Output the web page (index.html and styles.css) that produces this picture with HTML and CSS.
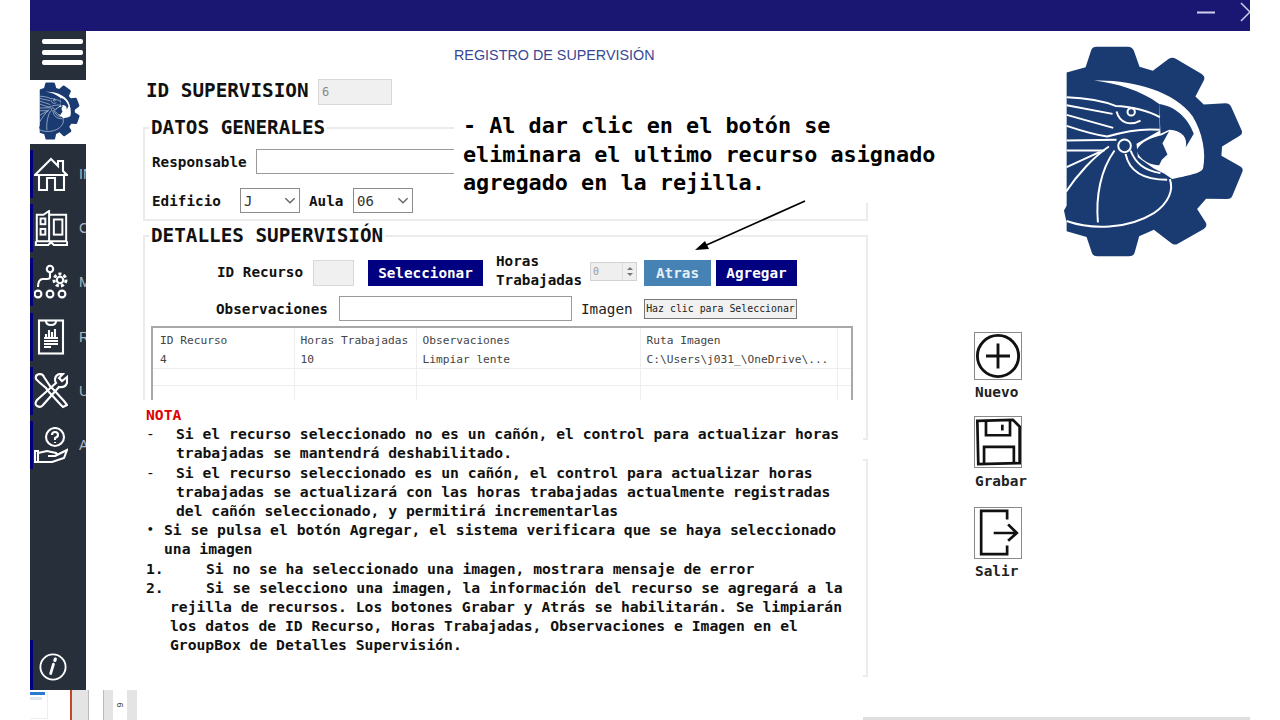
FILE: index.html
```html
<!DOCTYPE html>
<html lang="es">
<head>
<meta charset="utf-8">
<title>Registro de Supervisión</title>
<link rel="stylesheet" href="styles.css">
</head>
<body>
<svg class="defs" aria-hidden="true">
  <defs>
    <g id="tecnm">
      <path class="lg-fill" d="M78 218 L135 202 L152 150 Q156 140 168 140 L262 140 Q275 140 280 152 L297 200 L337 212 L385 176 Q396 170 406 176 L484 222 Q496 230 490 242 L465 290 L490 314 L555 310 Q568 310 573 322 L604 392 Q608 402 598 408 L545 440 L543 468 L600 500 Q610 506 606 516 L576 588 Q572 598 560 598 L497 597 L470 628 L496 668 Q502 680 490 688 L412 732 Q402 738 392 730 L340 690 L296 710 L282 760 Q278 770 266 770 L170 770 Q158 770 154 760 L138 712 L78 695 L78 668 L70 632 L78 618 Z"/>
      <path class="lg-white" d="M160 242 C270 238 400 272 456 348 C486 396 498 460 488 505 C482 522 440 526 395 538 L372 522 L340 506 L292 472 L288 432 L358 392 L356 312 C300 272 230 250 160 242 Z"/>
      <path class="lg-fill" d="M356 312 C400 318 442 350 460 402 L436 442 C442 415 426 392 386 390 L360 402 Z"/>
      <path class="lg-fill" d="M288 452 C298 425 338 412 364 406 L386 394 L366 430 L381 464 L364 480 L356 496 C330 496 298 482 288 452 Z"/>
      <g class="lg-line">
        <path d="M78 292 C130 294 180 300 225 318 C270 318 330 335 358 352"/>
        <path d="M78 316 L216 342"/>
        <path d="M78 345 L218 384"/>
        <path d="M78 378 C120 392 165 405 200 410 C250 395 310 385 358 390"/>
        <path d="M78 422 L228 420"/>
        <path d="M78 452 L192 452"/>
        <path d="M78 502 L178 456"/>
        <path d="M76 576 C110 525 160 470 205 440"/>
        <path d="M172 668 C165 590 180 510 222 452"/>
        <path d="M78 664 C150 690 260 690 340 640 C385 610 400 570 388 538"/>
        <path d="M255 462 C265 510 300 540 380 540"/>
        <path d="M270 452 C285 490 310 512 360 520"/>
        <path d="M228 335 C238 372 270 378 300 362"/>
        <circle cx="252" cy="438" r="19"/>
        <circle cx="272" cy="336" r="11"/>
      </g>
    </g>
  </defs>
</svg>

<div class="app">
  <header class="topbar">
    <svg class="win-min" viewBox="0 0 18 3"><rect width="18" height="2" y="0.5"/></svg>
    <svg class="win-close" viewBox="0 0 10 20"><path d="M1 1 L10 10 L1 19"/></svg>
  </header>

  <div class="workspace">
    <aside class="sidebar">
      <div class="menu-btn"><span></span><span></span><span></span></div>
      <div class="side-logo">
        <svg class="logo-small" viewBox="68 135 545 640" preserveAspectRatio="none"><use href="#tecnm"/></svg>
      </div>
      <nav class="nav">
        <a class="nav-item">
          <svg class="nav-ic" viewBox="0 0 34 34"><path d="M1 18 L17 2 L24 9 V4 H29 V14 L33 18 Z"/><path d="M5 18 V33 H13 V21 H21 V33 H30 V18"/></svg>
          <span>INICIO</span>
        </a>
        <a class="nav-item">
          <svg class="nav-ic" viewBox="0 0 34 38"><path d="M2 5 L9 5 L15 1 V33 H2 Z"/><path d="M15 5 H33 V33 H15"/><path d="M1 33 V37 H14 L17 34 L20 37 H34 V33"/><rect x="6" y="9" width="5" height="6"/><rect x="6" y="20" width="5" height="6"/><rect x="20" y="10" width="9" height="16"/></svg>
          <span>CATÁLOGOS</span>
        </a>
        <a class="nav-item">
          <svg class="nav-ic" viewBox="0 0 34 34"><circle cx="16" cy="4" r="3.2"/><path d="M16 8 V12 Q16 14 13 14 H9 Q4 14 4 22"/><circle cx="4" cy="29" r="3.4"/><circle cx="16" cy="29" r="3.4"/><circle cx="28" cy="29" r="3.4"/><circle cx="26" cy="15" r="3.2"/><circle class="nav-dash" cx="26" cy="15" r="6"/></svg>
          <span>MOVIMIENTOS</span>
        </a>
        <a class="nav-item">
          <svg class="nav-ic" viewBox="0 0 34 34"><rect x="5" y="0.5" width="24" height="33"/><path d="M12 1 Q12 5 17 5 Q22 5 22 1"/><path d="M10 18 H24 M12 18 V14 M15 18 V10 M18 18 V12 M21 18 V9 M10 21 H24 M10 24 H24 M10 27 H17"/></svg>
          <span>REPORTES</span>
        </a>
        <a class="nav-item">
          <svg class="nav-ic" viewBox="0 0 34 36"><path d="M2 6 Q1 2 5 1 Q9 1 10 4 L16 13 L19 16 L30 28 L33 32 L29 34 L26 31 L15 19 L12 15 L5 9 Z"/><path d="M33 4 L28 8 L25 5 L29 1 Q22 0 21 6 Q21 9 22 10 L3 27 Q0 31 3 33 Q7 35 9 32 L25 14 Q31 15 33 10 Z"/></svg>
          <span>UTILERÍAS</span>
        </a>
        <a class="nav-item">
          <svg class="nav-ic" viewBox="0 0 34 36"><circle cx="21" cy="10" r="9"/><path d="M18 8 Q18 5 21 5 Q24 5 24 8 Q24 10 21 11 V13 M21 15 V16"/><path d="M1 24 H4 V35 H1 Z"/><path d="M4 26 L13 24 L22 26 Q24 28 21 29 H14 M21 29 L33 23 L30 31 L18 35 H4"/></svg>
          <span>AYUDA</span>
        </a>
      </nav>
      <div class="nav-foot">
        <svg class="info-ic" viewBox="0 0 30 30"><circle cx="15" cy="15" r="13.5"/><path d="M12.5 22 L15.5 12"/><path d="M17 8 L17.5 6.5"/></svg>
      </div>
    </aside>

    <main class="form">
      <h1 class="title">REGISTRO DE SUPERVISIÓN</h1>

      <div class="id-row">
        <label class="lbl-big">ID SUPERVISION</label>
        <input class="field field-off field-id" value="6" disabled>
      </div>

      <fieldset class="box box-datos">
        <legend>DATOS GENERALES</legend>
        <div class="row row-resp">
          <label class="lbl lbl-resp">Responsable</label>
          <input class="field field-resp">
        </div>
        <div class="row row-edif">
          <label class="lbl lbl-edif">Edificio</label>
          <div class="combo"><span>J</span><svg viewBox="0 0 10 6"><path d="M1 1 L5 5 L9 1"/></svg></div>
          <label class="lbl lbl-aula">Aula</label>
          <div class="combo"><span>06</span><svg viewBox="0 0 10 6"><path d="M1 1 L5 5 L9 1"/></svg></div>
        </div>
      </fieldset>

      <fieldset class="box box-detalles">
        <legend>DETALLES SUPERVISIÓN</legend>
        <div class="row row-rec">
          <label class="lbl lbl-rec">ID Recurso</label>
          <input class="field field-off field-rec" disabled>
          <button class="btn btn-sel">Seleccionar</button>
          <label class="lbl lbl-horas">Horas<br>Trabajadas</label>
          <div class="spin"><span>0</span><div class="spin-arrows"><i class="up"></i><i class="down"></i></div></div>
          <button class="btn btn-atras">Atras</button>
          <button class="btn btn-agregar">Agregar</button>
        </div>
        <div class="row row-obs">
          <label class="lbl lbl-obs">Observaciones</label>
          <input class="field field-obs">
          <label class="lbl-img">Imagen</label>
          <button class="btn-img">Haz clic para Seleccionar</button>
        </div>
        <div class="grid-wrap">
          <table class="grid">
            <colgroup><col class="c1"><col class="c2"><col class="c3"><col class="c4"><col></colgroup>
            <tr class="head"><td>ID Recurso</td><td>Horas Trabajadas</td><td>Observaciones</td><td>Ruta Imagen</td><td></td></tr>
            <tr class="first"><td>4</td><td>10</td><td>Limpiar lente</td><td>C:\Users\j031_\OneDrive\...</td><td></td></tr>
            <tr><td></td><td></td><td></td><td></td><td></td></tr>
            <tr><td></td><td></td><td></td><td></td><td></td></tr>
          </table>
        </div>
      </fieldset>

      <fieldset class="box box-empty"></fieldset>

      <div class="callout">- Al dar clic en el botón se<br>eliminara el ultimo recurso asignado<br>agregado en la rejilla.</div>

      <svg class="arrow" viewBox="0 0 120 60"><path class="arrow-line" d="M115 1 L12 47"/><path class="arrow-head" d="M5 50 L15 41 L19 49 Z"/></svg>

      <section class="note">
        <div class="note-title">NOTA</div>
        <div class="item item-dash"><span class="mark mark-thin">-</span><p>Si el recurso seleccionado no es un cañón, el control para actualizar horas<br>trabajadas se mantendrá deshabilitado.</p></div>
        <div class="item item-dash"><span class="mark mark-thin">-</span><p>Si el recurso seleccionado es un cañón, el control para actualizar horas<br>trabajadas se actualizará con las horas trabajadas actualmente registradas<br>del cañón seleccionado, y permitirá incrementarlas</p></div>
        <div class="item item-bullet"><span class="mark">•</span><p>Si se pulsa el botón Agregar, el sistema verificara que se haya seleccionado<br>una imagen</p></div>
        <div class="item item-num"><span class="mark">1.</span><p>Si no se ha seleccionado una imagen, mostrara mensaje de error</p></div>
        <div class="item item-num"><span class="mark">2.</span><p>Si se selecciono una imagen, la información del recurso se agregará a la</p></div>
        <p class="cont">rejilla de recursos. Los botones Grabar y Atrás se habilitarán. Se limpiarán<br>los datos de ID Recurso, Horas Trabajadas, Observaciones e Imagen en el<br>GroupBox de Detalles Supervisión.</p>
      </section>
    </main>

    <aside class="right">
      <svg class="logo-big" viewBox="68 135 545 640"><use href="#tecnm"/></svg>
      <div class="tools">
        <div class="tool tool-nuevo">
          <div class="tool-box"><svg viewBox="0 0 47 48"><circle cx="23.5" cy="24" r="21.5"/><path d="M11 24 H36 M23.5 11 V37"/></svg></div>
          <span>Nuevo</span>
        </div>
        <div class="tool tool-grabar">
          <div class="tool-box tool-box-tall"><svg viewBox="0 0 47 52"><path d="M2 4 L39 3 L46 10 L46 48 L3 49 Z"/><path d="M11 4 V19 H36 V4"/><path d="M28 8 V14"/><path d="M9 48 V31 H40 V48"/></svg></div>
          <span>Grabar</span>
        </div>
        <div class="tool tool-salir">
          <div class="tool-box tool-box-tall"><svg viewBox="0 0 47 52"><path d="M33 12 V3 H6 V48 H33 V39"/><path d="M19 26 H43 M34 17 L43 26 L34 34"/></svg></div>
          <span>Salir</span>
        </div>
      </div>
    </aside>
  </div>

  <footer class="strip">
    <div class="thumb-win"><div class="thumb-bar"></div><div class="thumb-row"></div></div>
    <div class="thumb-red"></div>
    <div class="thumb-page"></div>
    <div class="thumb-ruler"><div class="thumb-sheet"><span class="thumb-six">6</span></div></div>
    <div class="strip-line"></div>
  </footer>
</div>
</body>
</html>
```

FILE: styles.css
```css
* { box-sizing: border-box; }
html, body { margin: 0; height: 720px; overflow: hidden; background: #fff; }
body { font-family: "DejaVu Sans Mono", "Liberation Mono", monospace; color: #111; }
.defs { position: absolute; width: 0; height: 0; }

.lg-fill { fill: #1a3b72; }
.lg-white { fill: #fff; }
.lg-line { fill: none; stroke: #fff; stroke-width: 6; }

.app { width: 1220px; height: 720px; margin-left: 30px; display: flex; flex-direction: column; }

.topbar { height: 31px; flex: none; background: #1a1772; display: flex; align-items: center; justify-content: flex-end; gap: 25px; padding-bottom: 7px; }
.win-min { width: 18px; height: 3px; fill: #cfd0ee; }
.win-close { width: 10px; height: 20px; fill: none; stroke: #cfd0ee; stroke-width: 1.5; }

.workspace { height: 659px; flex: none; display: flex; }

.sidebar { width: 56px; flex: none; display: flex; flex-direction: column; overflow: hidden; }
.menu-btn { height: 49px; background: #272f3b; display: flex; flex-direction: column; gap: 5.5px; padding: 8px 3px 0 12px; }
.menu-btn span { display: block; height: 5px; border-radius: 2px; background: #fff; }
.side-logo { height: 64px; padding: 2px 0 0 9px; }
.logo-small { display: block; width: 41px; height: 58px; }
.nav { flex: 1; background: #272f3b; padding-top: 6px; display: flex; flex-direction: column; gap: 6.2px; }
.nav-item { height: 48px; flex: none; display: flex; align-items: center; gap: 11px; padding-left: 1px; border-left: 3px solid #000080; color: #b4b8c0; font: 14px "Liberation Sans", sans-serif; white-space: nowrap; }
.nav-ic { width: 34px; height: 36px; flex: none; fill: none; stroke: #fff; stroke-width: 2.1; }
.nav-dash { stroke-width: 3; stroke-dasharray: 3 2.2; }
.nav-foot { height: 50px; flex: none; background: #272f3b; border-left: 3px solid #000080; padding: 13px 0 0 6px; }
.info-ic { display: block; width: 28px; height: 28px; fill: none; stroke: #fff; stroke-width: 2; stroke-linecap: round; }
.info-ic path:nth-of-type(1) { stroke-width: 3; }
.info-ic path:nth-of-type(2) { stroke-width: 3.4; }

.form { width: 782px; flex: none; padding: 16px 0 0 57px; position: relative; }
.title { margin: 0 0 0 311px; font: 400 14.35px/16px "Liberation Sans", sans-serif; color: #3a4796; white-space: nowrap; }

.id-row { margin-top: 16px; height: 26px; display: flex; align-items: center; padding-left: 3px; }
.lbl-big { width: 172px; margin-bottom: 3px; font-size: 19.3px; font-weight: 700; white-space: nowrap; }

.field { display: block; height: 25px; padding: 0 3px; border: 1px solid #9a9a9a; background: #fff; border-radius: 0; outline: 0; font: 12px "DejaVu Sans Mono", monospace; }
.field-off { background: #f0f0f0; border: 1px solid #d8d8d8; color: #888; }
.field-id { width: 74px; height: 26px; }
.field-rec { width: 41px; height: 26px; }
.field-resp { width: 360px; }
.field-obs { width: 233px; }

.box { margin: 0; padding: 0 0 0 7px; border: 2px solid #ebebeb; width: 725px; min-width: 0; }
.box legend { margin-left: -3px; padding: 0 2px; font-size: 19.3px; line-height: 23px; font-weight: 700; white-space: nowrap; }
.box-datos { margin-top: 11px; height: 105px; }
.box-detalles { margin-top: 3px; height: 216px; }
.box-empty { margin-top: 19px; height: 218px; }

.row { display: flex; align-items: center; }
.lbl { font-size: 14.3px; font-weight: 700; white-space: nowrap; }
.row-resp { margin-top: 10px; }
.lbl-resp { width: 104px; }
.row-edif { margin-top: 14px; }
.lbl-edif { width: 88px; }
.lbl-aula { width: 44px; margin-left: 9px; }
.combo { width: 60px; height: 25px; border: 1px solid #8c8c8c; background: #fff; display: flex; align-items: center; justify-content: space-between; padding: 0 2px 0 3px; font-size: 14px; color: #333; }
.combo svg { width: 14px; height: 7px; fill: none; stroke: #666; stroke-width: 1.2; }

.row-rec { margin-top: 12px; height: 27px; }
.lbl-rec { width: 96px; margin-left: 65px; margin-bottom: 2px; }
.btn { height: 26px; padding: 0; border: 0; font: 700 14.3px "DejaVu Sans Mono", monospace; color: #fff; background: #000080; }
.btn-sel { width: 115px; margin-left: 14px; }
.lbl-horas { width: 94px; margin-left: 13px; margin-bottom: 4px; line-height: 19px; }
.spin { width: 47px; height: 19px; margin-bottom: 3px; background: #efefef; border: 1px solid #d2d2d2; display: flex; justify-content: space-between; align-items: center; padding-left: 2px; font-size: 10px; color: #999; }
.spin-arrows { width: 14px; height: 100%; border-left: 1px solid #ddd; display: flex; flex-direction: column; align-items: center; justify-content: center; gap: 3px; }
.spin-arrows i { display: block; width: 0; height: 0; border-left: 3px solid transparent; border-right: 3px solid transparent; }
.spin-arrows .up { border-bottom: 3px solid #777; }
.spin-arrows .down { border-top: 3px solid #777; }
.btn-atras { width: 67px; margin-left: 7px; background: #4682b4; color: #e4eef6; }
.btn-agregar { width: 81px; margin-left: 5px; }

.row-obs { margin-top: 10px; }
.lbl-obs { width: 123px; margin-left: 64px; }
.lbl-img { width: 63px; margin-left: 9px; font-size: 14.3px; color: #222; }
.btn-img { width: 153px; height: 20px; padding: 0; border: 1px solid #777; background: #f1f1f1; font: 9.9px "DejaVu Sans Mono", monospace; color: #222; white-space: nowrap; }

.grid-wrap { width: 702px; height: 100px; margin: 5px 0 0 -1px; border: 2px solid #a8a8a8; overflow: hidden; }
.grid { width: 100%; border-collapse: collapse; table-layout: fixed; font-size: 11.2px; color: #444; }
.grid .c1 { width: 141px; }
.grid .c2 { width: 122px; }
.grid .c3 { width: 224px; }
.grid .c4 { width: 197px; }
.grid td { height: 17px; padding: 0 6px; border-right: 1px solid #eee; border-bottom: 1px solid #eee; white-space: nowrap; overflow: hidden; }
.grid .head td { height: 21px; border-bottom: 0; padding-top: 3px; }
.grid .first td { height: 19px; padding-top: 3px; }
.grid td:first-child { padding-left: 7px; }
.grid td:last-child { border-right: 0; }

.callout { position: absolute; left: 368px; top: 81px; width: 486px; height: 91px; padding: 0 0 0 9px; background: #fff; font-size: 21.8px; line-height: 28.5px; font-weight: 700; white-space: nowrap; color: #000; }
.arrow { position: absolute; left: 604px; top: 169px; width: 120px; height: 60px; }
.arrow-line { fill: none; stroke: #000; stroke-width: 1.7; }
.arrow-head { fill: #000; }

.note { position: absolute; left: 57px; top: 369px; width: 720px; height: 280px; padding: 5px 0 0 3px; background: #fff; font-size: 14.7px; line-height: 19.2px; font-weight: 700; white-space: nowrap; color: #111; }
.note-title { color: #e00000; }
.note p { margin: 0; }
.item { display: flex; }
.mark { flex: none; }
.mark-thin { font-weight: 400; }
.item-dash .mark { width: 30px; }
.item-bullet .mark { width: 18px; font-size: 11px; padding-left: 1px; }
.item-num .mark { width: 60px; }
.note .cont { margin-left: 24px; }

.right { flex: 1; padding-top: 14px; display: flex; flex-direction: column; }
.logo-big { display: block; width: 182px; height: 213px; margin-left: 195px; flex: none; }
.tools { margin: 74px 0 0 106px; display: flex; flex-direction: column; align-items: flex-start; }
.tool { display: flex; flex-direction: column; font-size: 14.4px; font-weight: 700; line-height: 18px; color: #222; }
.tool span { margin: 3px 0 0 1px; }
.tool-grabar { margin-top: 15px; }
.tool-grabar span { margin-top: 4px; }
.tool-salir { margin-top: 17px; }
.tool-box { width: 48px; height: 48px; border: 1px solid #8a8a8a; }
.tool-box-tall { height: 52px; }
.tool-box svg { display: block; width: 100%; height: 100%; fill: none; stroke: #111; stroke-width: 2.8; }
.tool-nuevo svg { stroke-width: 3; }

.strip { height: 30px; flex: none; display: flex; align-items: stretch; position: relative; }
.thumb-win { width: 18px; height: 27px; margin-top: 2px; border: solid #eee; border-width: 0 1px 1px 0; }
.thumb-bar { width: 15px; height: 3px; background: #2a78d0; }
.thumb-row { width: 12px; height: 3px; margin-top: 2px; background: #dde6f0; }
.thumb-red { width: 2px; margin-left: 22px; background: #c4472c; }
.thumb-page { width: 17px; background: #e4e4e4; border-right: 1px solid #bbb; }
.thumb-ruler { width: 34px; margin-left: 14px; background: #e4e4e4; border-left: 1px solid #bbb; padding-left: 9px; }
.thumb-sheet { width: 14px; height: 100%; background: #fff; display: flex; justify-content: center; align-items: center; }
.thumb-six { display: block; font: 9px "Liberation Sans", sans-serif; color: #444; transform: rotate(90deg); }
.strip-line { position: absolute; right: 0; bottom: 0; width: 387px; height: 3px; background: #dedede; }
```
